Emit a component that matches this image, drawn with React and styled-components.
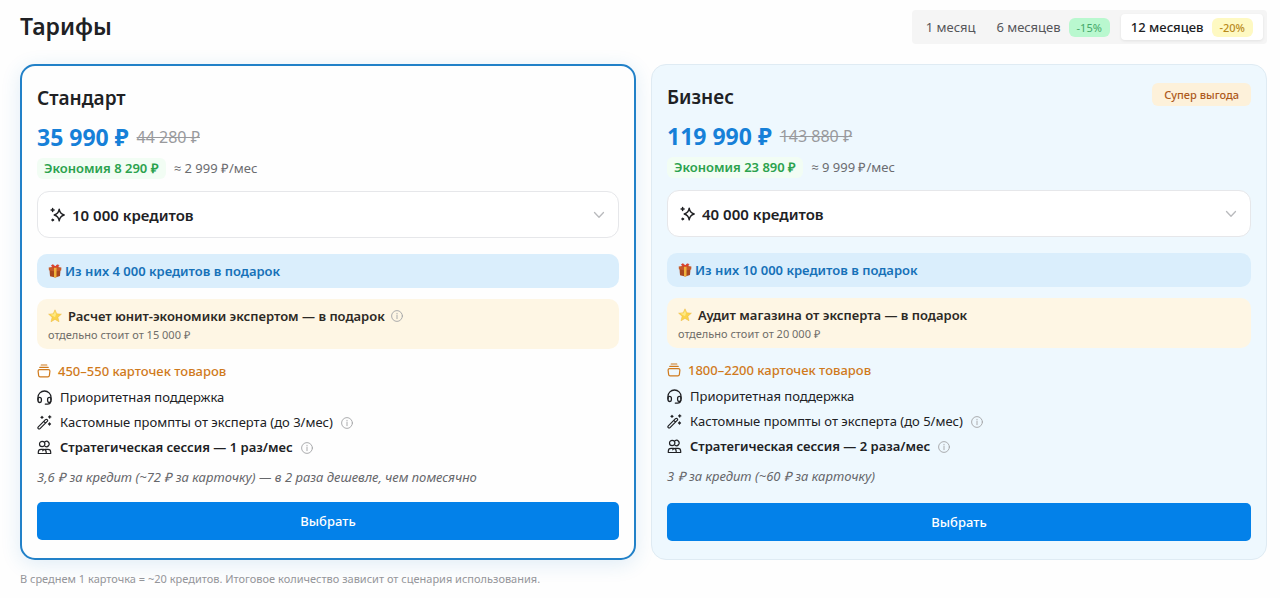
import { useState } from 'react';
import styled, { createGlobalStyle } from 'styled-components';

const periods = [
    { id: "1", label: "1 месяц" },
    { id: "6", label: "6 месяцев", discount: "-15%", tone: "green" },
    { id: "12", label: "12 месяцев", discount: "-20%", tone: "yellow" },
];

const plans = [
    {
        name: "Стандарт",
        price: "35 990 ₽",
        oldPrice: "44 280 ₽",
        saving: "Экономия 8 290",
        monthly: "≈ 2 999",
        credits: "10 000 кредитов",
        gift: "Из них 4 000 кредитов в подарок",
        bonus: "Расчет юнит-экономики экспертом — в подарок",
        bonusInfo: true,
        bonusPrice: "отдельно стоит от 15 000",
        cards: "450–550 карточек товаров",
        prompts: "Кастомные промпты от эксперта (до 3/мес)",
        session: "Стратегическая сессия — 1 раз/мес",
        note: ["3,6 ", "за кредит (~72 ", "за карточку) — в 2 раза дешевле, чем помесячно"],
        selected: true,
    },
    {
        name: "Бизнес",
        badge: "Супер выгода",
        price: "119 990 ₽",
        oldPrice: "143 880 ₽",
        saving: "Экономия 23 890",
        monthly: "≈ 9 999",
        credits: "40 000 кредитов",
        gift: "Из них 10 000 кредитов в подарок",
        bonus: "Аудит магазина от эксперта — в подарок",
        bonusPrice: "отдельно стоит от 20 000",
        cards: "1800–2200 карточек товаров",
        prompts: "Кастомные промпты от эксперта (до 5/мес)",
        session: "Стратегическая сессия — 2 раза/мес",
        note: ["3 ", "за кредит (~60 ", "за карточку)"],
    },
];

const SparklesIcon = () => (
    <Icon viewBox="0 0 16 16" $size={16}>
        <path d="M9.200 2.200c.6 3.700 1.700 5 5 5.800-3.300.8-4.400 2.100-5 5.800-.6-3.700-1.700-5-5-5.800 3.300-.8 4.400-2.100 5-5.800Z" strokeWidth="1.400" />
        <path d="M2.600 1.600v3M1.100 3.100h3" strokeWidth="1.500" />
        <circle cx="2.700" cy="13" r="1" fill="currentColor" strokeWidth=".8" />
    </Icon>
);

const StackIcon = () => (
    <Icon viewBox="0 0 14 14" $size={14}>
        <path d="M4.200 1h5.600M2.800 3.400h8.400" strokeWidth="1.200" />
        <path d="M2.600 5.700h8.800c.8 0 1.500.6 1.500 1.400l-.5 4.300c-.1.800-.7 1.400-1.500 1.400H3.100c-.8 0-1.400-.6-1.500-1.400l-.5-4.300c0-.8.7-1.400 1.500-1.400Z" strokeWidth="1.200" />
    </Icon>
);

const HeadphonesIcon = () => (
    <Icon viewBox="0 0 15 15" $size={15}>
        <path d="M1 10V7.300a6.500 6.300 0 0 1 13 0V10" strokeWidth="1.300" />
        <path d="M1 8.800c0-1 .6-1.500 1.500-1.500 1.300 0 1.900.7 1.900 1.900v1.600c0 1.100-.5 1.700-1.500 1.700C1.600 12.500 1 11.600 1 10.400ZM14 8.800c0-1-.6-1.500-1.500-1.500-1.300 0-1.900.7-1.900 1.900v1.600c0 1.100.5 1.700 1.500 1.700 1.300 0 1.900-.9 1.900-2.100Z" strokeWidth="1.300" />
        <path d="M13.700 11.500c-.2 1.700-1.200 2.600-3.200 2.600H8.300" strokeWidth="1.300" />
    </Icon>
);

const WandIcon = () => (
    <Icon viewBox="0 0 15 15" $size={15}>
        <path d="m1.300 11.900 7.200-7.200c.5-.5 1.200-.5 1.700 0s.5 1.200 0 1.700L3 13.600c-.5.5-1.200.5-1.700 0s-.5-1.200 0-1.700ZM6.800 6.400l1.700 1.700" strokeWidth="1.200" />
        <path d="M5 1.300v2M4 2.300h2M12.700.8v2.200M11.600 1.900h2.200M12.500 8v2M11.500 9h2" strokeWidth="1.300" />
    </Icon>
);

const UsersIcon = () => (
    <Icon viewBox="0 0 15 15" $size={15}>
        <circle cx="5.200" cy="4" r="2.700" strokeWidth="1.200" />
        <path d="M8 1.700a2.700 2.700 0 1 1 0 4.600" strokeWidth="1.200" />
        <path d="M1.300 13.500v-1.300c0-1.600 1.200-2.800 2.800-2.800h2.300c1.600 0 2.800 1.200 2.800 2.800v1.300H1.300ZM9.200 13.500h4.500v-1.300c0-1.600-1.200-2.800-2.800-2.800H8.200c-1.100 0-2 .6-2.500 1.400" strokeWidth="1.200" />
    </Icon>
);

const ChevronIcon = () => (
    <Chevron viewBox="0 0 12 12" $size={12}>
        <path d="m1.500 3.500 4.500 4.700 4.500-4.700" strokeWidth="1.300" />
    </Chevron>
);

const GiftIcon = () => (
    <Emoji viewBox="0 0 14 14">
        <path d="M1.500 5.500h11l-.5 6.400L7.200 13.600 2 12.200Z" fill="#a8471f" />
        <path d="m.7 3.500 6.500-1 6.200 1-.2 3-6 1L.9 6.300Z" fill="#c65a2a" />
        <path d="M6 3h2.500v10.300l-1.300.3L6 13.300Z" fill="#efb13c" />
        <path d="M7.200 3.300C5.500 3.400 3.300 2.700 3.600 1.400 4 .2 6.400.7 7.200 3.300ZM7.200 3.300c1.700.1 3.900-.6 3.600-1.900-.4-1.200-2.800-.7-3.600 1.900Z" fill="#e0492f" stroke="#d02f20" strokeWidth=".6" />
    </Emoji>
);

const StarIcon = () => (
    <Emoji viewBox="0 0 14 14">
        <path d="m7 .8 1.800 4 4.600.4-3.500 3 1.100 4.600L7 10.400l-4 2.400 1.100-4.600-3.500-3 4.600-.4Z" fill="#fbd34b" stroke="#edbb45" strokeWidth=".5" strokeLinejoin="round" />
        <path d="m7 2.200 1 3-1 3-4.700-2.700 3.400-.3Z" fill="#fee985" />
    </Emoji>
);

const Info = ({ label }) => (
    <InfoButton type="button" aria-label={label}>
        <Icon viewBox="0 0 12 12" $size={12}>
            <circle cx="6" cy="6" r="5.400" strokeWidth=".9" />
            <path d="M6 5.400v3.300M6 3.300v.7" strokeWidth=".9" />
        </Icon>
    </InfoButton>
);

function PlanCard({ plan }) {
    return (
        <Card $selected={plan.selected}>
            <CardHead>
                <CardTitle>{plan.name}</CardTitle>
                {plan.badge && <Badge>{plan.badge}</Badge>}
            </CardHead>
            <PriceRow>
                <Price>{plan.price}</Price>
                <OldPrice>{plan.oldPrice}</OldPrice>
            </PriceRow>
            <SavingRow>
                <Saving>{plan.saving} <Ruble>₽</Ruble></Saving>
                <Monthly>{plan.monthly} <Ruble>₽</Ruble>/мес</Monthly>
            </SavingRow>
            <SelectBox>
                <SparklesIcon />
                <Select aria-label={`Кредиты, ${plan.name}`} defaultValue={plan.credits}>
                    <option>{plan.credits}</option>
                </Select>
                <ChevronIcon />
            </SelectBox>
            <Gift><GiftIcon />{plan.gift}</Gift>
            <Bonus>
                <BonusTitle>
                    <StarIcon />
                    <span>{plan.bonus}</span>
                    {plan.bonusInfo && <Info label="Подробнее о расчете" />}
                </BonusTitle>
                <BonusPrice>{plan.bonusPrice} <Ruble>₽</Ruble></BonusPrice>
            </Bonus>
            <CardsCount><StackIcon />{plan.cards}</CardsCount>
            <Features>
                <Feature><HeadphonesIcon />Приоритетная поддержка</Feature>
                <Feature><WandIcon />{plan.prompts}<Info label="Подробнее о промптах" /></Feature>
                <Feature $bold><UsersIcon />{plan.session}<Info label="Подробнее о сессии" /></Feature>
            </Features>
            <Note>
                {plan.note[0]}<Ruble>₽</Ruble> {plan.note[1]}<Ruble>₽</Ruble> {plan.note[2]}
            </Note>
            <ChooseButton type="button">Выбрать</ChooseButton>
        </Card>
    );
}

export default function App() {
    const [period, setPeriod] = useState("12");

    return (
        <Page>
            <GlobalStyle />
            <Header>
                <Title>Тарифы</Title>
                <Periods>
                    {periods.map((item) => (
                        <PeriodButton
                            key={item.id}
                            type="button"
                            aria-pressed={period === item.id}
                            $active={period === item.id}
                            onClick={() => setPeriod(item.id)}
                        >
                            {item.label}
                            {item.discount && <Discount $tone={item.tone}>{item.discount}</Discount>}
                        </PeriodButton>
                    ))}
                </Periods>
            </Header>
            <Plans>
                {plans.map((plan) => <PlanCard key={plan.name} plan={plan} />)}
            </Plans>
            <Footnote>
                В среднем 1 карточка = ~20 кредитов. Итоговое количество зависит от сценария использования.
            </Footnote>
        </Page>
    );
}

const GlobalStyle = createGlobalStyle`
  * {
    box-sizing: border-box;
  }

  body {
    margin: 0;
    background: #fefefe;
    color: #202124;
    font-family: 'Noto Sans', 'Open Sans', sans-serif;
    font-size: 13px;
  }

  button,
  select {
    font: inherit;
    color: inherit;
  }
`;

const Page = styled.main`
  padding: 10px 13px 10px 20px;
`;

const Header = styled.header`
  display: flex;
  align-items: flex-start;
  justify-content: space-between;
  margin-bottom: 20px;
`;

const Title = styled.h1`
  margin: 0;
  font-size: 23px;
  line-height: 32px;
  font-weight: 600;
`;

const Periods = styled.div`
  display: flex;
  gap: 1px;
  padding: 4px;
  background: #f5f5f5;
  border-radius: 4px;
`;

const PeriodButton = styled.button`
  display: flex;
  align-items: center;
  gap: 8px;
  height: 26px;
  padding: 0 10px;
  border: 0;
  border-radius: 4px;
  cursor: pointer;
  font-weight: ${({ $active }) => ($active ? 500 : 400)};
  color: ${({ $active }) => ($active ? '#202124' : '#55565a')};
  background: ${({ $active }) => ($active ? '#fff' : 'transparent')};
  box-shadow: ${({ $active }) => ($active ? '0 1px 3px rgba(0, 0, 0, 0.08)' : 'none')};
`;

const Discount = styled.span`
  padding: 0 8px;
  border-radius: 6px;
  font-size: 11px;
  line-height: 19px;
  color: ${({ $tone }) => ($tone === 'green' ? '#45a869' : '#b98a1a')};
  background: ${({ $tone }) => ($tone === 'green' ? '#b9f8cf' : '#fef9c2')};
`;

const Plans = styled.div`
  display: grid;
  grid-template-columns: 1fr 1fr;
  gap: 15px;
`;

const Card = styled.section`
  display: flex;
  flex-direction: column;
  padding: 18px 15px;
  border-radius: 15px;
  border: ${({ $selected }) => ($selected ? '2px solid #2281c8' : '1px solid #dfebf3')};
  background: ${({ $selected }) => ($selected ? '#fefefe' : '#eef8fe')};
  box-shadow: ${({ $selected }) => ($selected ? '0 4px 20px rgba(34, 129, 200, 0.14)' : 'none')};
`;

const CardHead = styled.div`
  display: flex;
  justify-content: space-between;
  height: 28px;
  margin-bottom: 8px;
`;

const CardTitle = styled.h2`
  margin: 0;
  font-size: 19px;
  line-height: 28px;
  font-weight: 600;
`;

const Badge = styled.span`
  align-self: flex-start;
  padding: 0 12px;
  border-radius: 6px;
  background: #fdf1da;
  color: #ad5a1c;
  font-size: 11px;
  font-weight: 500;
  line-height: 23px;
`;

const PriceRow = styled.div`
  display: flex;
  align-items: center;
  gap: 8px;
  line-height: 34px;
`;

const Price = styled.strong`
  color: #1680d8;
  font-size: 23px;
  font-weight: 700;
`;

const OldPrice = styled.s`
  color: #999a9d;
  font-size: 16px;
`;

const SavingRow = styled.div`
  display: flex;
  align-items: center;
  gap: 8px;
  margin: 4px 0 12px;
  line-height: 21px;
`;

const Saving = styled.span`
  padding: 0 7px;
  border-radius: 6px;
  background: #f2fdf4;
  color: #2ba24d;
  font-weight: 600;
`;

const Monthly = styled.span`
  color: #6b6c70;
`;

const Ruble = styled.span`
  font-family: 'Liberation Serif', serif;
`;

const Icon = styled.svg`
  flex: none;
  width: ${({ $size }) => $size}px;
  height: ${({ $size }) => $size}px;
  fill: none;
  stroke: currentColor;
  stroke-linecap: round;
  stroke-linejoin: round;
`;

const Chevron = styled(Icon)`
  color: #b9babd;
  pointer-events: none;
`;

const Emoji = styled.svg`
  flex: none;
  width: 14px;
  height: 14px;
`;

const SelectBox = styled.div`
  display: flex;
  align-items: center;
  gap: 6px;
  height: 47px;
  margin-bottom: 16px;
  padding: 0 13px 0 12px;
  border: 1px solid #e6e7ea;
  border-radius: 12px;
  background: #fff;
`;

const Select = styled.select`
  flex: 1;
  min-width: 0;
  height: 100%;
  padding: 0;
  border: 0;
  outline: 0;
  appearance: none;
  background: transparent;
  font-size: 15px;
  font-weight: 600;
`;

const Gift = styled.div`
  display: flex;
  align-items: center;
  gap: 3px;
  margin-bottom: 11px;
  padding: 0 11px;
  border-radius: 10px;
  background: #daeefc;
  color: #1671b8;
  font-weight: 600;
  line-height: 34px;
`;

const Bonus = styled.div`
  margin-bottom: 12px;
  padding: 7px 11px 5px;
  border-radius: 10px;
  background: #fef6e4;
`;

const BonusTitle = styled.div`
  display: flex;
  align-items: center;
  gap: 6px;
  color: #2c2925;
  font-weight: 600;
  line-height: 20px;
`;

const BonusPrice = styled.div`
  color: #6f6d69;
  font-size: 11px;
  line-height: 18px;
`;

const CardsCount = styled.div`
  display: flex;
  align-items: center;
  gap: 7px;
  margin-bottom: 4px;
  color: #d07a1c;
  font-weight: 500;
  line-height: 20px;
`;

const Features = styled.ul`
  list-style: none;
  margin: 0 0 7px;
  padding: 0;
`;

const Feature = styled.li`
  display: flex;
  align-items: center;
  gap: 8px;
  line-height: 25px;
  font-weight: ${({ $bold }) => ($bold ? 600 : 400)};
`;

const InfoButton = styled.button`
  display: flex;
  padding: 0;
  border: 0;
  background: transparent;
  color: #a3a4a6;
  cursor: pointer;
`;

const Note = styled.p`
  margin: 0 0 14px;
  color: #66676b;
  font-style: italic;
  line-height: 20px;
`;

const ChooseButton = styled.button`
  height: 38px;
  margin-top: auto;
  border: 0;
  border-radius: 5px;
  background: #0381e9;
  color: #fff;
  font-weight: 500;
  cursor: pointer;
`;

const Footnote = styled.p`
  margin: 10px 0 0;
  color: #94959a;
  font-size: 11px;
  line-height: 18px;
`;
